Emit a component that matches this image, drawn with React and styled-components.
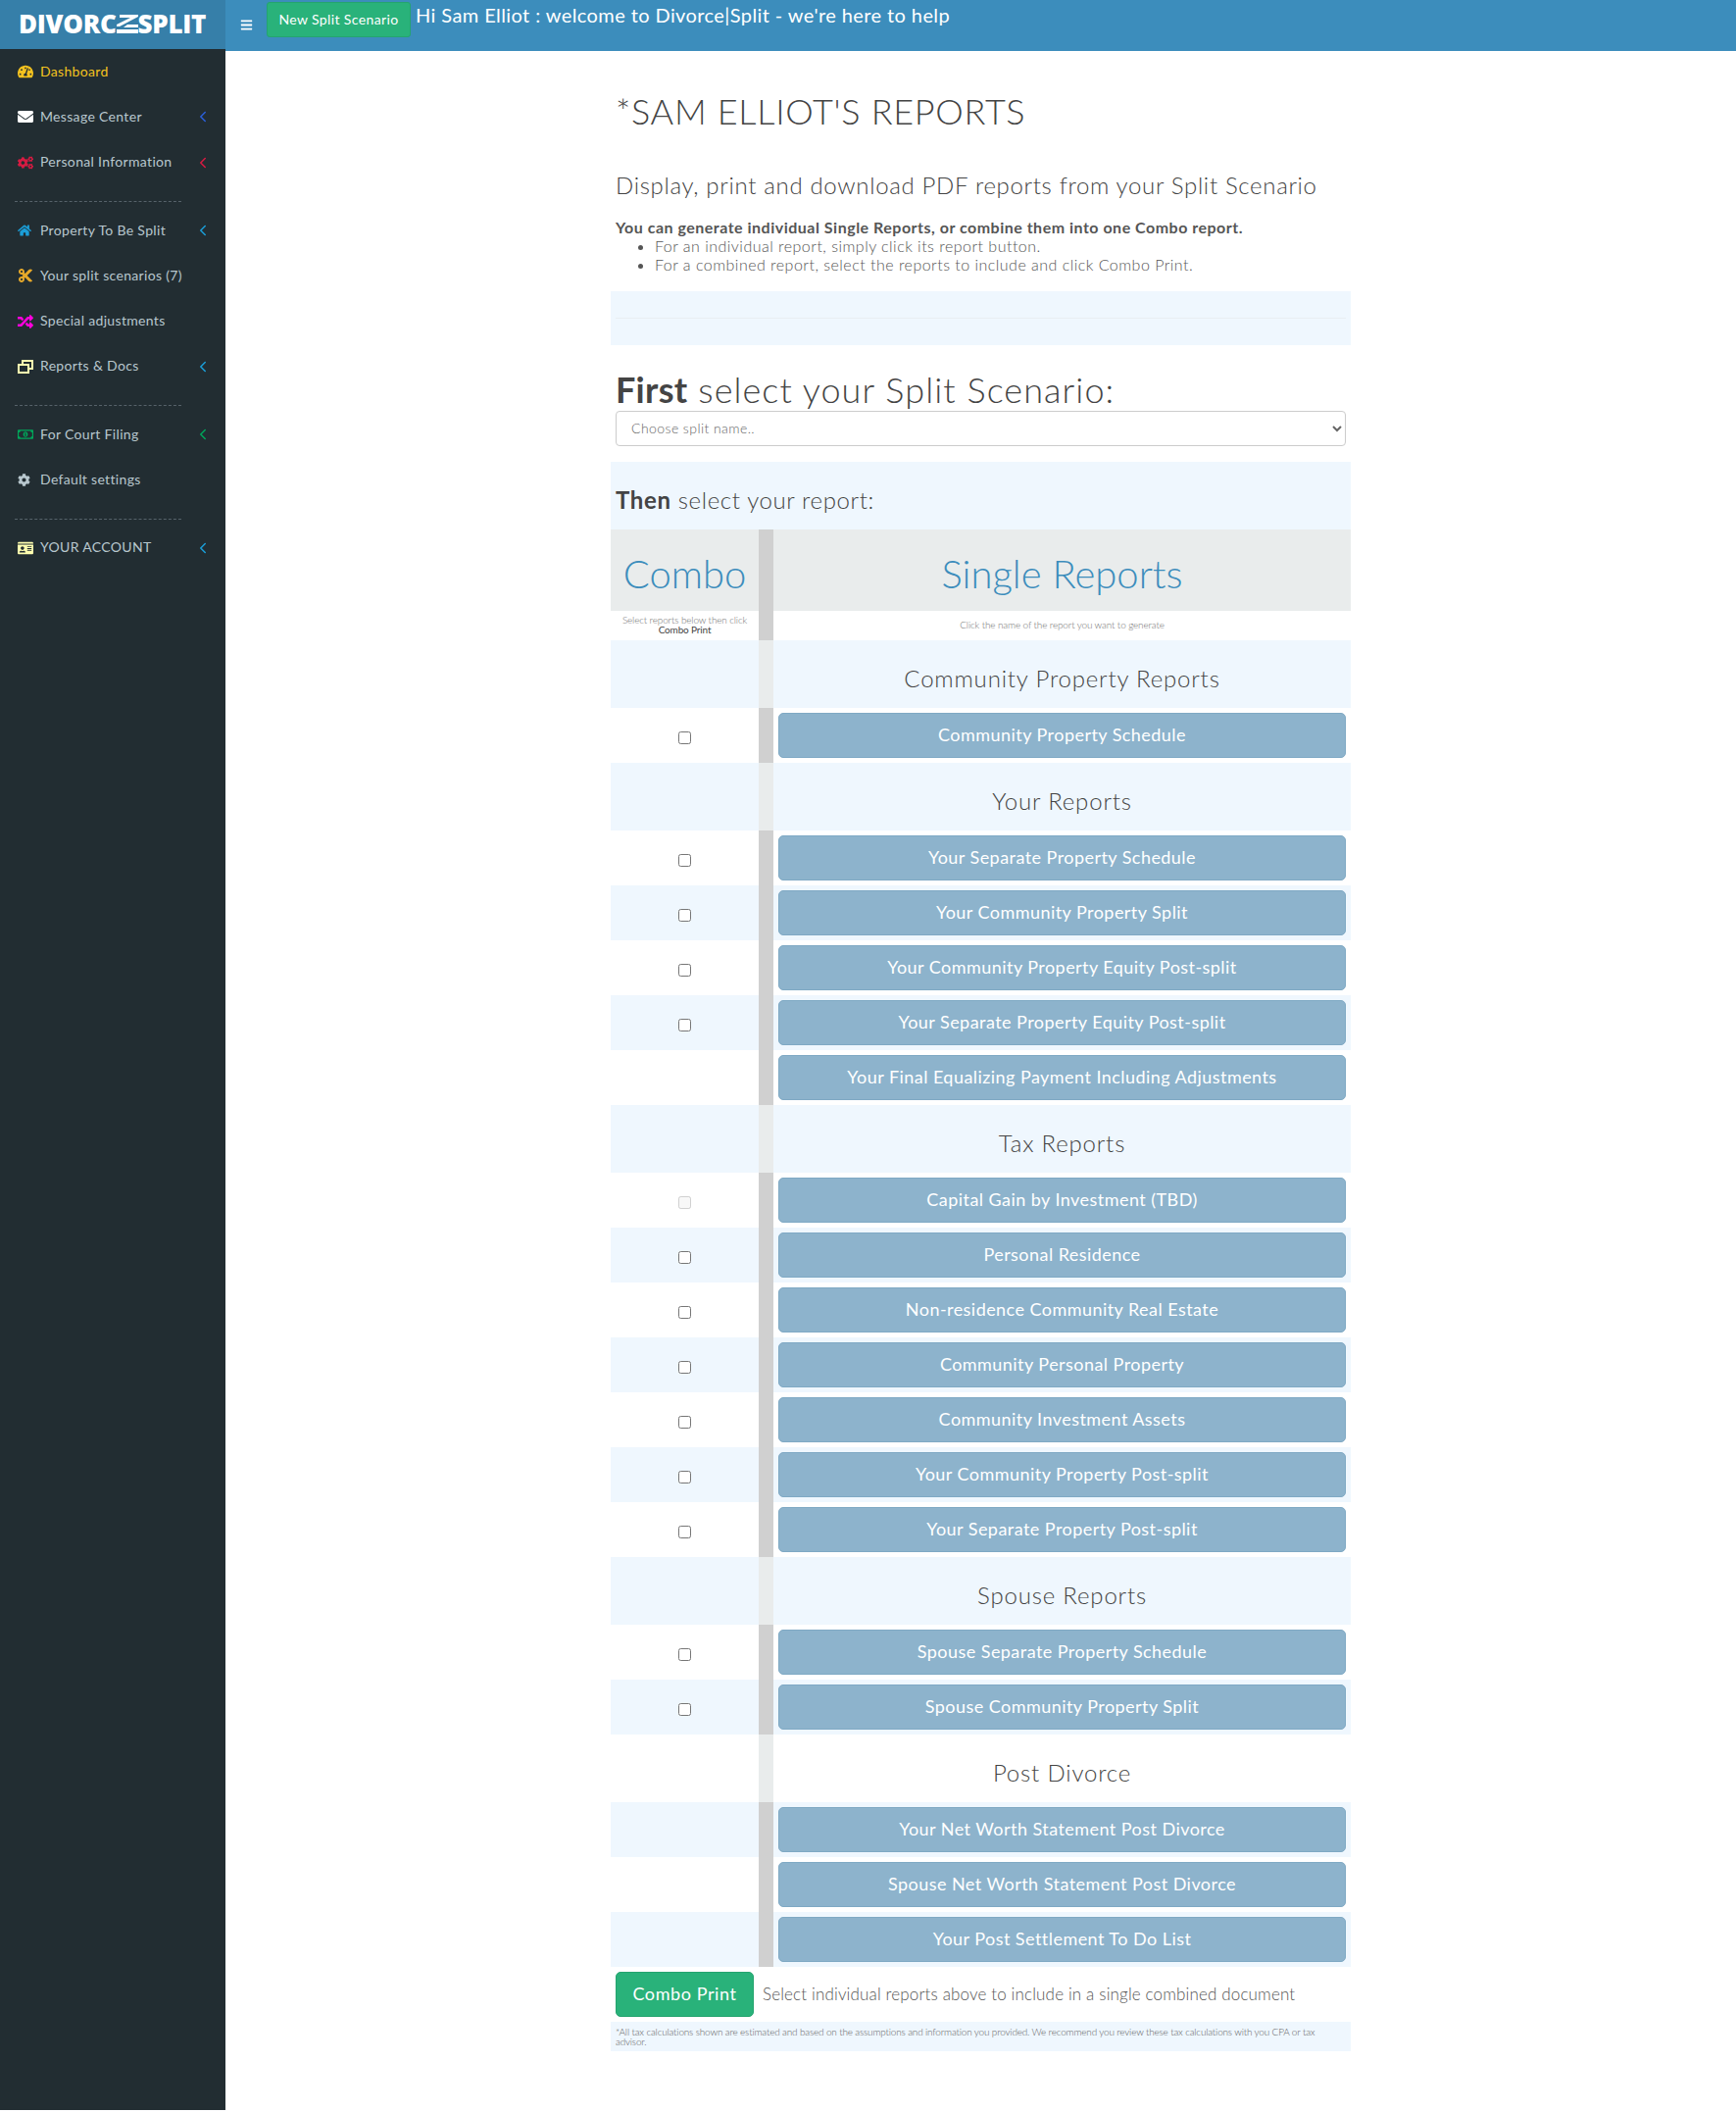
import React from "react";
import styled, { createGlobalStyle } from "styled-components";
import {
  FaTachometerAlt,
  FaEnvelope,
  FaCogs,
  FaHome,
  FaCut,
  FaRandom,
  FaRegMoneyBillAlt,
  FaCog,
  FaIdCard,
  FaBars,
} from "react-icons/fa";
import { ChevronLeft } from "lucide-react";

const GlobalStyle = createGlobalStyle`
  html, body {
    margin: 0;
    padding: 0;
    background: #fff;
    font-family: Lato, "Open Sans", sans-serif;
    color: #555;
  }
  * { box-sizing: border-box; }
`;

const Page = styled.div`
  width: 1771px;
  height: 2154px;
  overflow: hidden;
  display: flex;
  align-items: flex-start;
`;

const SideColumn = styled.aside`
  width: 230px;
  flex: none;
`;

const LogoBox = styled.div`
  height: 50px;
  background: #367fa9;
  display: flex;
  align-items: center;
  padding: 0 0 2px 19px;
  font-family: "Open Sans", sans-serif;
  font-weight: 800;
  font-size: 26px;
  letter-spacing: -0.3px;
  color: #fff;
`;

const LogoMark = styled.svg`
  width: 22px;
  height: 19px;
  flex: none;
`;

const Sidebar = styled.nav`
  height: 2102px;
  background: #222d32;
`;

const NavItem = styled.div`
  height: 46.3px;
  display: flex;
  align-items: center;
  padding: 0 14px 0 18px;
  font-size: 14px;
  letter-spacing: 0.33px;
  color: ${(p) => p.$text || "#b8c7ce"};
`;

const NavIcon = styled.span`
  width: 23px;
  display: flex;
  font-size: ${(p) => p.$size || 16}px;
  color: ${(p) => p.$color};
`;

const NavLabel = styled.span`
  flex: 1;
  padding-bottom: 2px;
`;

const Chevron = styled.span`
  display: flex;
  color: ${(p) => p.$color};
`;

const NavDivider = styled.div`
  margin: 16px 45px 6px 15px;
  border-top: 1px dashed #56626a;
`;

const RightColumn = styled.div`
  flex: 1;
`;

const TopBar = styled.header`
  height: 52px;
  display: flex;
  background: #3c8dbc;
  color: #fff;
`;

const Burger = styled.span`
  width: 42px;
  padding: 19px 0 0 15px;
  font-size: 13px;
`;

const NewButton = styled.button`
  width: 147px;
  height: 36px;
  margin-top: 2px;
  padding: 0 0 2px;
  background: #29b27a;
  border: 1px solid #24a46f;
  border-radius: 3px;
  color: #fff;
  font-family: inherit;
  font-size: 14px;
  letter-spacing: 0.38px;
`;

const Welcome = styled.div`
  padding: 2px 0 0 5px;
  font-size: 20px;
  line-height: 26px;
  letter-spacing: 0.41px;
`;

const Main = styled.main`
  display: flex;
  justify-content: center;
`;

const Content = styled.div`
  width: 755px;
`;

const Intro = styled.div`
  padding: 41px 5px 0;
`;

const Title = styled.h1`
  margin: 0;
  font-size: 36px;
  line-height: 40px;
  font-weight: 300;
  letter-spacing: 0.7px;
  color: #444;
`;

const Subtitle = styled.h3`
  margin: 41px 0 0;
  font-size: 24px;
  line-height: 30px;
  font-weight: 300;
  letter-spacing: 0.67px;
  color: #444;
`;

const Lead = styled.div`
  margin-top: 18px;
  font-size: 16px;
  line-height: 19px;
  font-weight: 700;
  letter-spacing: 0.5px;
`;

const Notes = styled.ul`
  margin: 0;
  padding-left: 40px;
  font-size: 16px;
  line-height: 19px;
  font-weight: 300;
  letter-spacing: 0.48px;
`;

const BlueBand = styled.div`
  margin-top: 18px;
  height: 55px;
  background: #eff7fe;
  padding: 27px 5px 0;
`;

const BandRule = styled.hr`
  margin: 0;
  border: 0;
  border-top: 1px solid #e8eef2;
`;

const ScenarioBlock = styled.div`
  padding: 25px 5px 0;
`;

const ScenarioTitle = styled.h2`
  margin: 0;
  font-size: 36px;
  line-height: 40px;
  padding-bottom: 2px;
  font-weight: 300;
  letter-spacing: 1.07px;
  color: #444;
  b { font-weight: 700; letter-spacing: 0.27px; }
`;

const ScenarioSelect = styled.select`
  display: block;
  width: 100%;
  height: 36px;
  padding: 0 11px 2px;
  background: #fff;
  border: 1px solid #ccc;
  border-radius: 4px;
  color: #666;
  font-family: inherit;
  font-size: 14px;
  font-weight: 300;
  letter-spacing: 0.43px;
`;

const ThenBand = styled.div`
  margin-top: 16px;
  height: 69px;
  background: #eff7fe;
  padding: 24px 5px 0;
  font-size: 24px;
  line-height: 30px;
  font-weight: 300;
  letter-spacing: 0.63px;
  color: #444;
  b { font-weight: 700; }
`;

const Row = styled.div`
  display: grid;
  grid-template-columns: 151px 15px 1fr;
`;

const HeadCell = styled.div`
  height: 83px;
  background: #e9ecec;
  padding-top: 6px;
  display: flex;
  align-items: center;
  justify-content: center;
  font-size: 40px;
  font-weight: 300;
  color: #3c8dbc;
`;

const HintCell = styled.div`
  height: 30px;
  padding-bottom: 2px;
  display: flex;
  flex-direction: column;
  align-items: center;
  justify-content: center;
  font-size: 10px;
  line-height: 10px;
  font-weight: 300;
  letter-spacing: -0.15px;
  color: #777;
  b { font-weight: 400; color: #444; }
`;

const Rule = styled.div`
  background: ${(p) => p.$color};
`;

const Rows = styled.div`
  & > div:nth-child(odd) { background: #eff7fe; }
`;

const GroupTitle = styled.div`
  height: 69px;
  padding-top: 24px;
  text-align: center;
  font-size: 24px;
  line-height: 30px;
  font-weight: 300;
  letter-spacing: 0.82px;
  color: #444;
`;

const TickCell = styled.div`
  height: 56px;
  display: flex;
  align-items: center;
  justify-content: center;
  padding-top: 5px;
  input { margin: 0; }
`;

const ButtonCell = styled.div`
  padding: 5px;
`;

const ReportButton = styled.button`
  display: block;
  width: 100%;
  height: 46px;
  padding: 0 0 3px;
  background: #8db3cc;
  border: 1px solid #7fa9c4;
  border-radius: 5px;
  color: #fff;
  font-family: inherit;
  font-size: 18px;
  letter-spacing: 0.45px;
`;

const ComboBar = styled.div`
  padding: 5px;
  display: flex;
  align-items: center;
  gap: 9px;
  font-size: 17px;
  font-weight: 300;
  letter-spacing: 0.15px;
`;

const ComboNote = styled.span`
  padding-bottom: 2px;
`;

const ComboButton = styled.button`
  width: 141px;
  height: 46px;
  padding: 0 0 2px;
  background: #29b27a;
  border: 1px solid #24a46f;
  border-radius: 5px;
  color: #fff;
  font-family: inherit;
  font-size: 18px;
  letter-spacing: 0.6px;
`;

const Footnote = styled.div`
  height: 30px;
  padding: 5px;
  background: #eff7fe;
  font-size: 10px;
  line-height: 10px;
  font-weight: 300;
  letter-spacing: -0.18px;
  color: #666;
`;

// the two overlapping windows of the Reports & Docs entry
const WindowsIcon = () => (
  <svg width="16" height="14" viewBox="0 0 16 14" fill="none" stroke="currentColor" strokeWidth="2">
    <path d="M5 4V1h10v8h-4" />
    <rect x="1" y="5" width="10" height="8" />
  </svg>
);

const nav = [
  { label: "Dashboard", Icon: FaTachometerAlt, color: "#f4c21f", text: "#f4c21f" },
  { label: "Message Center", Icon: FaEnvelope, color: "#fff", arrow: "#2b5fd9" },
  { label: "Personal Information", Icon: FaCogs, color: "#d81b42", arrow: "#d81b42" },
  { divider: true },
  { label: "Property To Be Split", Icon: FaHome, color: "#1b9ed8", arrow: "#1b9ed8", size: 14 },
  { label: "Your split scenarios (7)", Icon: FaCut, color: "#e6a92a" },
  { label: "Special adjustments", Icon: FaRandom, color: "#ff00dd" },
  { label: "Reports & Docs", Icon: WindowsIcon, color: "#ffffb0", arrow: "#1b9ed8" },
  { divider: true },
  { label: "For Court Filing", Icon: FaRegMoneyBillAlt, color: "#00a65a", arrow: "#00a65a" },
  { label: "Default settings", Icon: FaCog, color: "#b8c7ce", size: 13 },
  { divider: true },
  { label: "YOUR ACCOUNT", Icon: FaIdCard, color: "#ffffb0", arrow: "#1b9ed8" },
];

const groups = [
  { title: "Community Property Reports", reports: [{ name: "Community Property Schedule", tick: true }] },
  {
    title: "Your Reports",
    reports: [
      { name: "Your Separate Property Schedule", tick: true },
      { name: "Your Community Property Split", tick: true },
      { name: "Your Community Property Equity Post-split", tick: true },
      { name: "Your Separate Property Equity Post-split", tick: true },
      { name: "Your Final Equalizing Payment Including Adjustments" },
    ],
  },
  {
    title: "Tax Reports",
    reports: [
      { name: "Capital Gain by Investment (TBD)", tick: true, disabled: true },
      { name: "Personal Residence", tick: true },
      { name: "Non-residence Community Real Estate", tick: true },
      { name: "Community Personal Property", tick: true },
      { name: "Community Investment Assets", tick: true },
      { name: "Your Community Property Post-split", tick: true },
      { name: "Your Separate Property Post-split", tick: true },
    ],
  },
  {
    title: "Spouse Reports",
    reports: [
      { name: "Spouse Separate Property Schedule", tick: true },
      { name: "Spouse Community Property Split", tick: true },
    ],
  },
  {
    title: "Post Divorce",
    reports: [
      { name: "Your Net Worth Statement Post Divorce" },
      { name: "Spouse Net Worth Statement Post Divorce" },
      { name: "Your Post Settlement To Do List" },
    ],
  },
];

const App = () => {
  return (
    <Page>
      <GlobalStyle />
      <SideColumn>
        <LogoBox>
          DIVORC
          <LogoMark viewBox="0 0 22 19">
            <path d="M3 0h19v2L3 12H0v-2L14 3H3zM11 10h11v3H7zM0 15h22v4H0z" fill="#fff" />
          </LogoMark>
          SPLIT
        </LogoBox>
        <Sidebar>
          {nav.map((item, i) =>
            item.divider ? (
              <NavDivider key={i} />
            ) : (
              <NavItem key={i} $text={item.text}>
                <NavIcon $color={item.color} $size={item.size}>
                  <item.Icon />
                </NavIcon>
                <NavLabel>{item.label}</NavLabel>
                {item.arrow && (
                  <Chevron $color={item.arrow}>
                    <ChevronLeft size={18} strokeWidth={2} />
                  </Chevron>
                )}
              </NavItem>
            )
          )}
        </Sidebar>
      </SideColumn>
      <RightColumn>
        <TopBar>
          <Burger>
            <FaBars />
          </Burger>
          <NewButton>New Split Scenario</NewButton>
          <Welcome>Hi Sam Elliot : welcome to Divorce|Split - we're here to help</Welcome>
        </TopBar>
        <Main>
          <Content>
            <Intro>
              <Title>*SAM ELLIOT'S REPORTS</Title>
              <Subtitle>Display, print and download PDF reports from your Split Scenario</Subtitle>
              <Lead>You can generate individual Single Reports, or combine them into one Combo report.</Lead>
              <Notes>
                <li>For an individual report, simply click its report button.</li>
                <li>For a combined report, select the reports to include and click Combo Print.</li>
              </Notes>
            </Intro>
            <BlueBand>
              <BandRule />
            </BlueBand>
            <ScenarioBlock>
              <ScenarioTitle>
                <b>First</b> select your Split Scenario:
              </ScenarioTitle>
              <ScenarioSelect>
                <option>Choose split name..</option>
              </ScenarioSelect>
            </ScenarioBlock>
            <ThenBand>
              <b>Then</b> select your report:
            </ThenBand>
            <Row>
              <HeadCell>Combo</HeadCell>
              <Rule $color="#d0d0d0" />
              <HeadCell>Single Reports</HeadCell>
            </Row>
            <Row>
              <HintCell>
                <span>Select reports below then click</span>
                <b>Combo Print</b>
              </HintCell>
              <Rule $color="#d0d0d0" />
              <HintCell>Click the name of the report you want to generate</HintCell>
            </Row>
            <Rows>
              {groups.flatMap((group) => [
                <Row key={group.title}>
                  <div />
                  <Rule $color="#e9ecec" />
                  <GroupTitle>{group.title}</GroupTitle>
                </Row>,
                ...group.reports.map((report) => (
                  <Row key={report.name}>
                    <TickCell>
                      {report.tick && <input type="checkbox" disabled={report.disabled} />}
                    </TickCell>
                    <Rule $color="#d0d0d0" />
                    <ButtonCell>
                      <ReportButton>{report.name}</ReportButton>
                    </ButtonCell>
                  </Row>
                )),
              ])}
            </Rows>
            <ComboBar>
              <ComboButton>Combo Print</ComboButton>
              <ComboNote>Select individual reports above to include in a single combined document</ComboNote>
            </ComboBar>
            <Footnote>
              *All tax calculations shown are estimated and based on the assumptions and information you provided. We recommend you review these tax calculations with you CPA or tax advisor.
            </Footnote>
          </Content>
        </Main>
      </RightColumn>
    </Page>
  );
};

export default App;
